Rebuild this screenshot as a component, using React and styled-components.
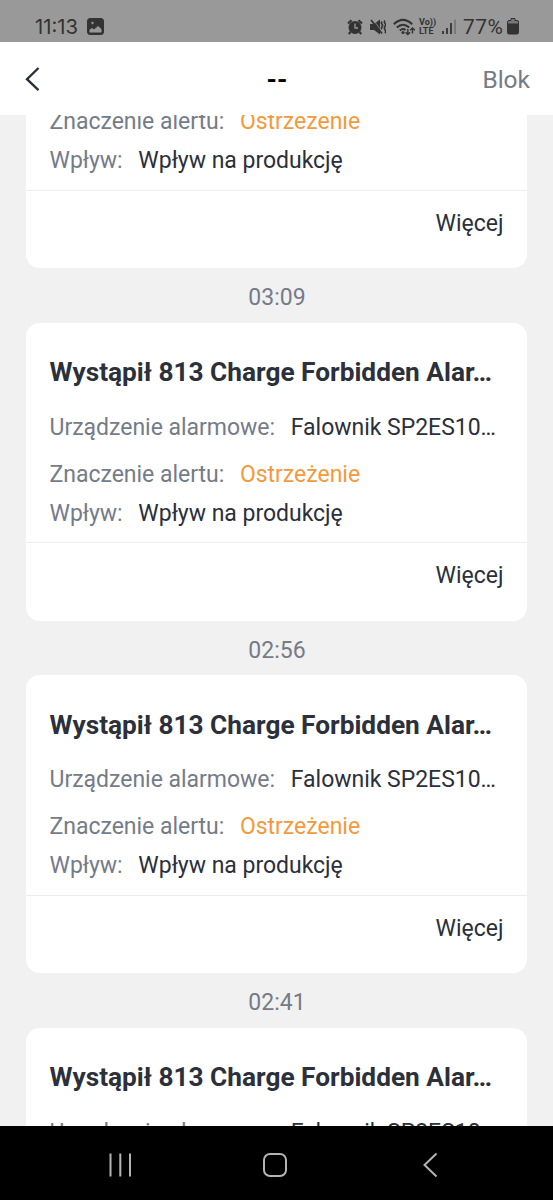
import React from 'react';
import styled, { createGlobalStyle } from 'styled-components';

const GlobalStyle = createGlobalStyle`
  * {
    box-sizing: border-box;
  }

  body {
    margin: 0;
    font-family: Roboto, 'Noto Sans', sans-serif;
  }
`;

const Screen = styled.div`
  display: flex;
  flex-direction: column;
  width: 553px;
  height: 1200px;
  overflow: hidden;
  background-color: #f1f1f1;
`;

const StatusBar = styled.div`
  display: flex;
  align-items: center;
  flex: none;
  height: 41.5px;
  padding: 12px 34px 0 35px;
  background-color: #999999;
  color: #333333;
`;

const Clock = styled.span`
  width: 52px;
  font-family: Inter, sans-serif;
  font-size: 20.2px;
  line-height: 28px;
`;

const StatusIcons = styled.div`
  display: flex;
  align-items: center;
  margin-left: auto;
`;

const Percent = styled.span`
  width: 42px;
  font-size: 21px;
  line-height: 28px;
  letter-spacing: 0.5px;
  margin: 1px 2px 0 6px;
`;

const VoLte = styled.span`
  display: flex;
  flex-direction: column;
  width: 17px;
  margin-left: 3px;
  font-size: 9px;
  font-weight: bold;
  line-height: 9px;
  white-space: nowrap;
`;

const Header = styled.header`
  display: grid;
  grid-template-columns: 1fr auto 1fr;
  align-items: center;
  flex: none;
  height: 73.5px;
  padding: 2px 23px 0 24px;
  background-color: white;
`;

const Title = styled.h1`
  margin: 0;
  color: black;
  font-size: 26.5px;
  font-weight: bold;
`;

const BlockButton = styled.span`
  justify-self: end;
  color: #757b87;
  font-size: 24.5px;
`;

const List = styled.main`
  flex: 1;
  min-height: 0;
  overflow: hidden;
  padding: 0 26px;
`;

const Scrolled = styled.div`
  margin-top: -145.2px;
`;

const Card = styled.article`
  height: 298.2px;
  padding-top: 29.5px;
  border-radius: 14px;
  background-color: white;
`;

const CardTitle = styled.h2`
  margin: 0 23.5px 15.7px;
  color: #2b303a;
  font-size: 26.25px;
  font-weight: bold;
  line-height: 40px;
  white-space: nowrap;
`;

const Row = styled.div`
  display: flex;
  gap: 15.7px;
  margin: 0 23.5px ${({ $gap }) => $gap || 0}px;
  font-size: 23px;
  letter-spacing: -0.02px;
  line-height: 39px;
  white-space: nowrap;
`;

const Label = styled.span`
  color: #757b87;
`;

const Value = styled.span`
  color: ${({ $warning }) => ($warning ? '#f39a3c' : '#2b303a')};
`;

const CardFooter = styled.div`
  margin-top: 9.5px;
  padding-right: 23.5px;
  border-top: 1px solid #ececec;
  color: #2b303a;
  font-size: 23px;
  line-height: 66.4px;
  text-align: right;
`;

const Time = styled.div`
  height: 54.5px;
  padding-left: 1px;
  color: #757b87;
  font-size: 23px;
  line-height: 60px;
  text-align: center;
`;

const NavBar = styled.nav`
  display: flex;
  align-items: center;
  flex: none;
  height: 74px;
  padding: 3px 0 0 108px;
  background-color: black;
`;

const Icon = styled.svg`
  display: block;
  flex: none;
  fill: none;
  stroke: currentColor;
  margin-left: ${({ $left }) => $left || 0}px;
`;

const NavIcon = styled(Icon)`
  color: #b4b4b4;
`;

const alerts = [
  { id: 1 },
  { id: 2, time: '03:09' },
  { id: 3, time: '02:56' },
  { id: 4, time: '02:41' },
];

const PhoneStatus = () => (
  <StatusBar>
    <Clock>11:13</Clock>
    <Icon width="17" height="17" viewBox="0 0 17 17" stroke="none">
      <rect x="0.5" y="0.5" width="16" height="16" rx="2.5" fill="#333" />
      <path d="M2 13.500V11.500l3-2 2 1.500L11 7.500l4 3.500v2.500q0 1.500-1.200 1.500H3.200q-1.200 0-1.200-1.500z" fill="#999" />
      <circle cx="5.5" cy="5" r="1.7" fill="#999" />
    </Icon>
    <StatusIcons>
      <Icon width="16" height="16" viewBox="0 0 16 16">
        <circle cx="8" cy="8.5" r="6.5" fill="#333" stroke="none" />
        <path d="M1 4.500L4.500 1.200M15 4.500L11.500 1.200M3.500 13L1.800 15M12.500 13l1.700 2" strokeWidth="2.2" />
        <path d="M8 4.500V9h3" stroke="#999" strokeWidth="1.3" />
      </Icon>
      <Icon $left={7} width="16" height="16" viewBox="0 0 16 16">
        <path d="M0 5h4l6-4.500v15L4 11H0z" fill="#333" stroke="none" />
        <path d="M3 .5l9 12" stroke="#999" strokeWidth="0.8" />
        <path d="M1 1l11 13.500" strokeWidth="1.8" />
        <path d="M12 2.500q-1.200 1.300 0 2.600t0 2.600 0 2.600M15 1.500q-1.200 1.500 0 3t0 3 0 3.200 0 3.500" strokeWidth="1.6" />
      </Icon>
      <Icon $left={7} width="23" height="18" viewBox="0 0 23 18">
        <path d="M.8 6.200Q10-2.400 19.200 6.200M3.800 9.600Q10 3.800 16.200 9.600M6.800 12.500Q10 9.800 12.500 12" strokeWidth="2" />
        <circle cx="10" cy="14.5" r="1.6" fill="#333" stroke="none" />
        <path d="M14.800 11v5.500M12.500 14.200l2.300 2.300 2.300-2.300M19.500 15.500V10M17.200 12.300l2.300-2.300 2.300 2.300" strokeWidth="1.4" />
      </Icon>
      <VoLte>
        <span>Vo))</span>
        <span>LTE</span>
      </VoLte>
      <Icon $left={6} width="15" height="17" viewBox="0 0 15 17">
        <path d="M1 16v-3M5 16v-6M9 16V5" strokeWidth="1.8" />
        <path d="M13 16V1.500" stroke="#777" strokeWidth="1.8" />
      </Icon>
      <Percent>77%</Percent>
      <Icon width="12" height="17" viewBox="0 0 12 17" stroke="none">
        <path d="M4 .5h4v2h2q1.500 0 1.500 1.500v2.500H.5V4Q.5 2.500 2 2.500h2z" fill="#777" />
        <path d="M.5 6h11v8.500q0 1.500-1.500 1.500H2q-1.500 0-1.500-1.500z" fill="#333" />
      </Icon>
    </StatusIcons>
  </StatusBar>
);

const AlertCard = () => (
  <Card>
    <CardTitle>Wystąpił 813 Charge Forbidden Alar…</CardTitle>
    <Row $gap={8}>
      <Label>Urządzenie alarmowe:</Label>
      <Value>Falownik SP2ES10…</Value>
    </Row>
    <Row>
      <Label>Znaczenie alertu:</Label>
      <Value $warning>Ostrzeżenie</Value>
    </Row>
    <Row>
      <Label>Wpływ:</Label>
      <Value>Wpływ na produkcję</Value>
    </Row>
    <CardFooter>Więcej</CardFooter>
  </Card>
);

const App = () => (
  <Screen>
    <GlobalStyle />
    <PhoneStatus />
    <Header>
      <Icon width="18" height="26" viewBox="0 0 18 26" color="#2b303a">
        <path d="M14.500 2L3 13.200l11.500 11" strokeWidth="2.400" />
      </Icon>
      <Title>--</Title>
      <BlockButton>Blok</BlockButton>
    </Header>
    <List>
      <Scrolled>
        {alerts.map(({ id, time }) => (
          <React.Fragment key={id}>
            {time && <Time>{time}</Time>}
            <AlertCard />
          </React.Fragment>
        ))}
      </Scrolled>
    </List>
    <NavBar>
      <NavIcon width="24" height="24" viewBox="0 0 24 24">
        <path d="M2.500 .5v23M12.300 .5v23M22 .5v23" strokeWidth="2" />
      </NavIcon>
      <NavIcon $left={130} width="26" height="26" viewBox="0 0 26 26">
        <rect x="2" y="2" width="22" height="22" rx="6" strokeWidth="2" />
      </NavIcon>
      <NavIcon $left={134} width="16" height="26" viewBox="0 0 16 26">
        <path d="M14.500 1.500L2.500 13l12 11.500" strokeWidth="2" />
      </NavIcon>
    </NavBar>
  </Screen>
);

export default App;
